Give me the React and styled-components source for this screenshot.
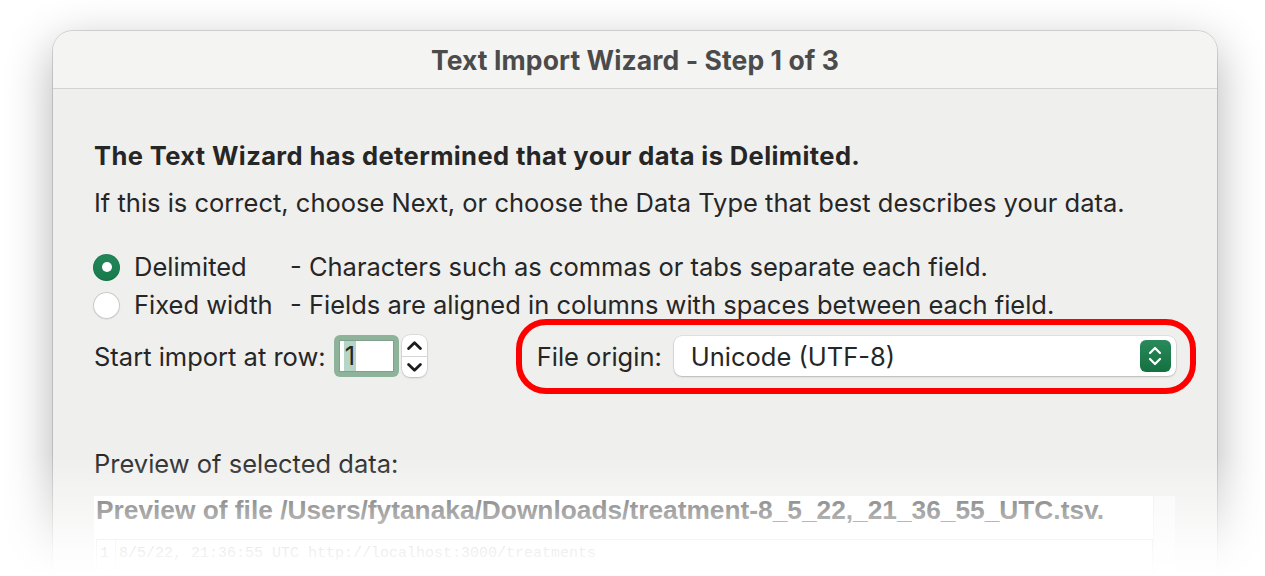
import React from "react";
import styled, { createGlobalStyle } from "styled-components";

const Global = createGlobalStyle`
  html, body { margin: 0; padding: 0; background: #ffffff; }
  body { font-family: Inter, "Noto Sans", sans-serif; -webkit-font-smoothing: antialiased; }
  * { box-sizing: border-box; }
`;

const Stage = styled.div`
  position: relative;
  height: 576px;
  overflow: hidden;
  padding: 31px 48px 0 53px;
  background: #ffffff;
`;

const Window = styled.div`
  height: 620px;
  background: #efefee;
  border-radius: 20px 20px 0 0;
  box-shadow: 0 0 0 1px rgba(0, 0, 0, 0.13), 0 14px 48px rgba(0, 0, 0, 0.3);
`;

const TitleBar = styled.div`
  height: 58px;
  display: flex;
  align-items: center;
  justify-content: center;
  background: #f4f4f2;
  border-bottom: 1px solid #d2d2d0;
  border-radius: 20px 20px 0 0;
  font-weight: 650;
  font-size: 26.5px;
  color: #4b4b4b;
  letter-spacing: 0.1px;
`;

const Content = styled.div`
  padding: 52px 41px 0 41px;
  color: #262626;
  font-size: 25.5px;
`;

const Line = styled.div`
  height: 30px;
  line-height: 30px;
  white-space: nowrap;
  font-weight: ${(p) => (p.$bold ? 700 : 400)};
  letter-spacing: ${(p) => (p.$bold ? "0.4px" : "0")};
  margin-top: ${(p) => p.$mt || 0}px;
`;

const RadioGroup = styled.div`
  margin-top: 35px;
  display: grid;
  grid-template-columns: 27px 142px auto;
  column-gap: 14px;
  row-gap: 10px;
  align-items: center;
  margin-left: -1px;
`;

const RadioLabel = styled.span`
  line-height: 28px;
  white-space: nowrap;
`;

const RadioDot = styled.span`
  width: 27px;
  height: 27px;
  border-radius: 50%;
  display: flex;
  align-items: center;
  justify-content: center;
  background: ${(p) => (p.$on ? "linear-gradient(#24875a, #167a4b)" : "#ffffff")};
  box-shadow: ${(p) =>
    p.$on ? "inset 0 0 0 1px rgba(0,0,0,0.08)" : "inset 0 0 0 1px #c8c8c8, 0 0.5px 1px rgba(0,0,0,0.1)"};
  &::after {
    content: "";
    display: ${(p) => (p.$on ? "block" : "none")};
    width: 10px;
    height: 10px;
    border-radius: 50%;
    background: #ffffff;
  }
`;

const ImportRow = styled.div`
  margin-top: 15px;
  height: 44px;
  display: flex;
  align-items: center;
`;

const RowLabel = styled.span`
  white-space: nowrap;
  flex-shrink: 0;
`;

const FocusRing = styled.div`
  flex-shrink: 0;
  margin-left: 8px;
  width: 65px;
  height: 42px;
  padding: 5px;
  border-radius: 6px;
  background: #8fb39a;
`;

const NumberField = styled.div`
  height: 100%;
  background: #ffffff;
  border: 1px solid #7fa08a;
  display: flex;
  align-items: center;
  padding-left: 4px;
`;

const Selected = styled.span`
  background: #b5d6c6;
  line-height: 30px;
  padding: 0 1px;
`;

const Stepper = styled.div`
  flex-shrink: 0;
  margin-left: 3px;
  width: 25px;
  height: 42px;
  border-radius: 8px;
  background: #ffffff;
  box-shadow: 0 0 0 0.5px rgba(0, 0, 0, 0.15), 0 1px 2px rgba(0, 0, 0, 0.15);
  display: grid;
  grid-template-rows: 1fr 1fr;
  overflow: hidden;
`;

const StepHalf = styled.div`
  display: flex;
  align-items: center;
  justify-content: center;
  border-top: ${(p) => (p.$bottom ? "1px solid #d6d6d6" : "none")};
`;

const Annotation = styled.div`
  flex-shrink: 0;
  margin: -16px 0 -16px 89px;
  width: 680px;
  height: 75px;
  border: 6px solid #ff0000;
  border-radius: 30px;
  padding: 0 14px 0 15px;
  display: flex;
  align-items: center;
  gap: 12px;
`;

const Select = styled.div`
  flex: 1;
  height: 40px;
  background: #ffffff;
  border-radius: 8px;
  box-shadow: 0 0 0 0.5px rgba(0, 0, 0, 0.12), 0 1px 2px rgba(0, 0, 0, 0.18);
  display: flex;
  align-items: center;
  justify-content: space-between;
  padding: 0 5px 0 17px;
`;

const SelectButton = styled.div`
  width: 31px;
  height: 32px;
  border-radius: 6px;
  background: linear-gradient(#2a8a5b, #14703f);
  display: flex;
  align-items: center;
  justify-content: center;
`;

const PreviewBox = styled.div`
  margin-top: 17px;
  width: 1081px;
  height: 120px;
  display: grid;
  grid-template-columns: 1fr 22px;
  background: #ffffff;
`;

const PreviewMain = styled.div`
  padding: 0 0 0 2px;
`;

const PreviewHead = styled.div`
  height: 28px;
  line-height: 28px;
  font-family: "Liberation Sans", Arial, sans-serif;
  font-weight: 700;
  font-size: 26.3px;
  color: #505050;
  white-space: nowrap;
`;

const DataRow = styled.div`
  margin-top: 15px;
  height: 32px;
  border: 1px solid #d4d4d4;
  display: flex;
  font-family: "Liberation Mono", monospace;
  font-size: 15px;
  color: #8a8a8a;
`;

const Cell = styled.div`
  padding: 5px 2px 0 3px;
  white-space: nowrap;
  border-right: ${(p) => (p.$num ? "1px solid #d4d4d4" : "none")};
  width: ${(p) => (p.$num ? "19px" : "auto")};
`;

const ScrollStrip = styled.div`
  background: #f8f8f8;
  border-left: 1px solid #ececec;
`;

const Fade = styled.div`
  position: absolute;
  left: 0;
  right: 0;
  bottom: 0;
  height: 122px;
  background: linear-gradient(
    to bottom,
    rgba(255, 255, 255, 0) 0%,
    rgba(255, 255, 255, 0.4) 40%,
    rgba(255, 255, 255, 0.85) 78%,
    #ffffff 100%
  );
  pointer-events: none;
`;

const Chevron = ({ up, color = "#2b2b2b", w = 14, sw = 2.4 }) => (
  <svg width={w} height={w * 0.6} viewBox="0 0 14 8.4" fill="none">
    <path
      d={up ? "M1.5 7 L7 1.6 L12.5 7" : "M1.5 1.4 L7 6.8 L12.5 1.4"}
      stroke={color}
      strokeWidth={sw}
      strokeLinecap="round"
      strokeLinejoin="round"
    />
  </svg>
);

export default function App() {
  return (
    <>
      <Global />
      <Stage>
        <Window>
          <TitleBar>Text Import Wizard - Step 1 of 3</TitleBar>
          <Content>
            <Line $bold>The Text Wizard has determined that your data is Delimited.</Line>
            <Line $mt={17}>
              If this is correct, choose Next, or choose the Data Type that best describes your data.
            </Line>
            <RadioGroup>
              <RadioDot $on />
              <RadioLabel>Delimited</RadioLabel>
              <RadioLabel>- Characters such as commas or tabs separate each field.</RadioLabel>
              <RadioDot />
              <RadioLabel>Fixed width</RadioLabel>
              <RadioLabel>- Fields are aligned in columns with spaces between each field.</RadioLabel>
            </RadioGroup>
            <ImportRow>
              <RowLabel>Start import at row:</RowLabel>
              <FocusRing>
                <NumberField>
                  <Selected>1</Selected>
                </NumberField>
              </FocusRing>
              <Stepper>
                <StepHalf>
                  <Chevron up w={15} sw={2.6} color="#1e1e1e" />
                </StepHalf>
                <StepHalf $bottom>
                  <Chevron w={15} sw={2.6} color="#1e1e1e" />
                </StepHalf>
              </Stepper>
              <Annotation>
                <RowLabel>File origin:</RowLabel>
                <Select>
                  <span>Unicode (UTF-8)</span>
                  <SelectButton>
                    <svg width="14" height="22" viewBox="0 0 14 22" fill="none">
                      <path d="M2 8 L7 3 L12 8" stroke="#fff" strokeWidth="2.2" strokeLinecap="round" strokeLinejoin="round" />
                      <path d="M2 14 L7 19 L12 14" stroke="#fff" strokeWidth="2.2" strokeLinecap="round" strokeLinejoin="round" />
                    </svg>
                  </SelectButton>
                </Select>
              </Annotation>
            </ImportRow>
            <Line $mt={71}>Preview of selected data:</Line>
            <PreviewBox>
              <PreviewMain>
                <PreviewHead>Preview of file /Users/fytanaka/Downloads/treatment-8_5_22,_21_36_55_UTC.tsv.</PreviewHead>
                <DataRow>
                  <Cell $num>1</Cell>
                  <Cell>8/5/22, 21:36:55 UTC http://localhost:3000/treatments</Cell>
                </DataRow>
              </PreviewMain>
              <ScrollStrip />
            </PreviewBox>
          </Content>
        </Window>
        <Fade />
      </Stage>
    </>
  );
}
